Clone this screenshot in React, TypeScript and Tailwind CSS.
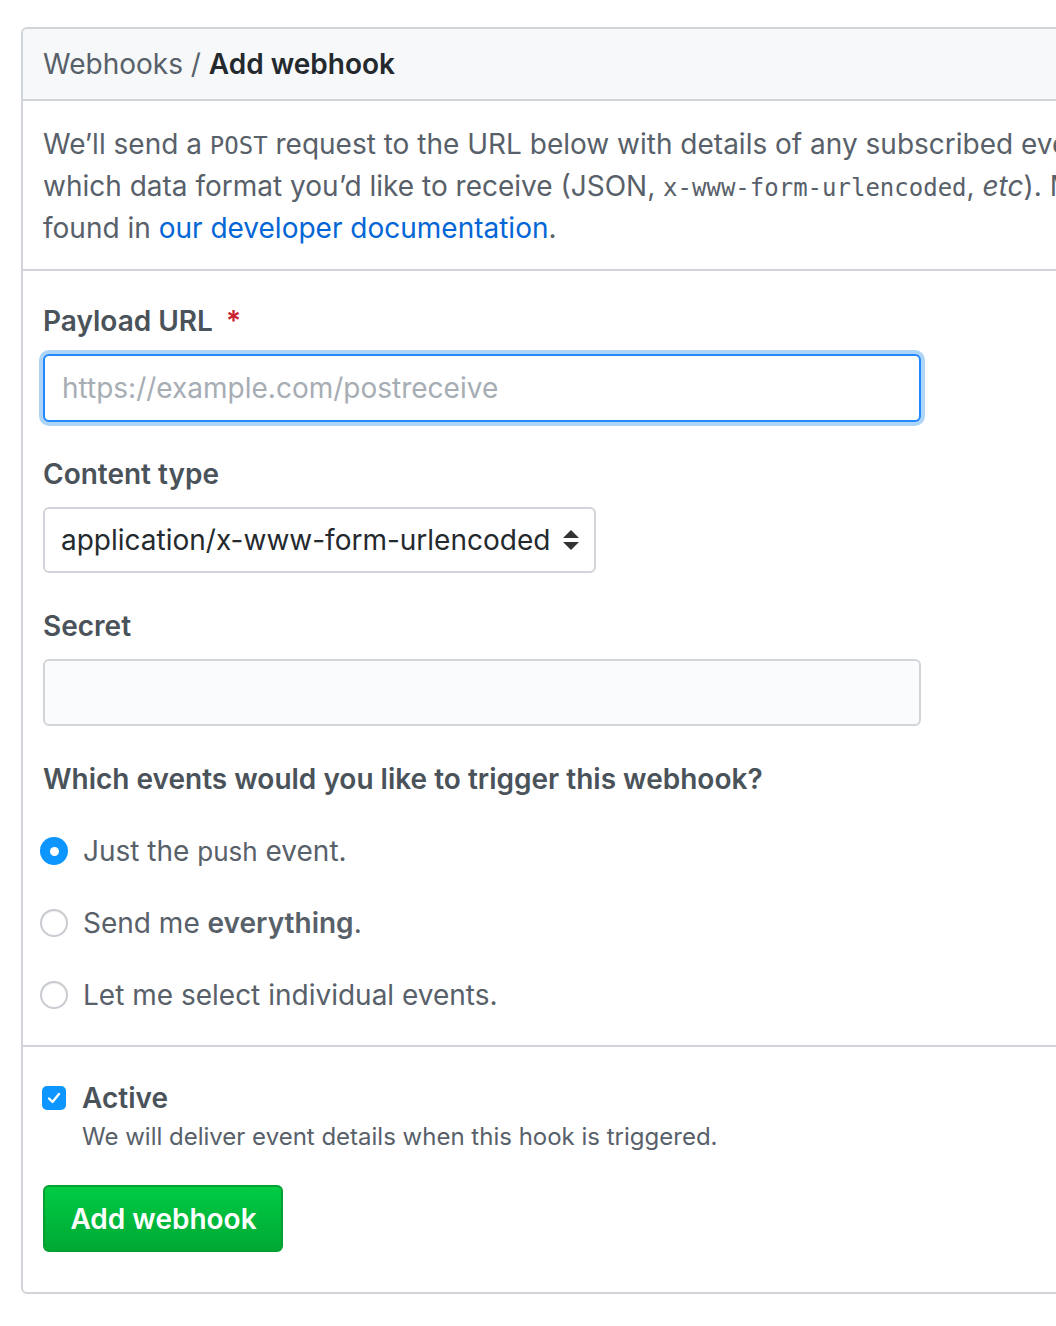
import React from 'react';

function Radio({ checked }: { checked?: boolean }) {
  if (checked) {
    return (
      <span className="-ml-[3px] flex h-[28px] w-[28px] shrink-0 items-center justify-center rounded-full bg-[#0d96ff]">
        <span className="h-[9px] w-[9px] rounded-full bg-white" />
      </span>
    );
  }
  return (
    <span className="-ml-[3px] h-[28px] w-[28px] shrink-0 rounded-full border-2 border-[#c9ccd0] bg-white shadow-[inset_0_1px_1px_rgba(0,0,0,0.06)]" />
  );
}

export default function App() {
  return (
    <div
      className="h-[1326px] w-[1056px] overflow-hidden bg-white pl-[21px] pt-[27px]"
      style={{ fontFamily: 'Inter, "Noto Sans", sans-serif' }}
    >
      <div className="w-[1200px] rounded-[6px] border-2 border-[#d1d5da] bg-white">
        {/* Header */}
        <div className="rounded-t-[5px] border-b-2 border-[#d1d5da] bg-[#f6f8fa] px-[20px] py-[14px] text-[28px] leading-[42px] text-[#586069]">
          Webhooks / <span className="font-semibold text-[#24292e]">Add webhook</span>
        </div>

        {/* Intro */}
        <div className="whitespace-nowrap border-b-2 border-[#d1d5da] px-[20px] pb-[20px] pt-[22px] text-[28px] leading-[42px] text-[#586069]">
          <p className="h-[42px]">
            We’ll send a <code className="font-['DejaVu_Sans_Mono',monospace] text-[24px] leading-none">POST</code> request to the URL below with details of any subscribed events. You can also specify
          </p>
          <p className="h-[42px]">
            which data format you’d like to receive (JSON,{' '}
            <code className="font-['DejaVu_Sans_Mono',monospace] text-[24px] leading-none">x-www-form-urlencoded</code>,{' '}
            <em>etc</em>). More information can be
          </p>
          <p className="h-[42px]">
            found in <a className="text-[#0366d6]">our developer documentation</a>.
          </p>
        </div>

        {/* Form */}
        <div className="border-b-2 border-[#d1d5da] px-[20px] pb-[29px] pt-[29px]">
          <label className="mb-[12px] block text-[28px] font-semibold leading-[42px] text-[#4a525a]">
            Payload URL <span className="ml-[6px] text-[#cb2431]">*</span>
          </label>
          <div className="flex h-[68px] w-[878px] items-center rounded-[6px] border-2 border-[#2188ff] bg-white pl-[17px] text-[28px] text-[#a6adb4] shadow-[0_0_0_4px_#aed4f8]">
            https://example.com/postreceive
          </div>

          <label className="mb-[12px] mt-[31px] block text-[28px] font-semibold leading-[42px] text-[#4a525a]">
            Content type
          </label>
          <div className="flex h-[66px] w-[553px] items-center justify-between whitespace-nowrap rounded-[6px] border-2 border-[#d1d5da] bg-white pl-[16px] pr-[14px] text-[28px] text-[#24292e]">
            <span>application/x-www-form-urlencoded</span>
            <svg width="18" height="22" viewBox="0 0 18 22" className="text-[#333]">
              <path d="M9 1 L17 9 L1 9 Z" fill="currentColor" />
              <path d="M1 13 L17 13 L9 21 Z" fill="currentColor" />
            </svg>
          </div>

          <label className="mb-[12px] mt-[32px] block text-[28px] font-semibold leading-[42px] text-[#4a525a]">
            Secret
          </label>
          <div className="h-[67px] w-[878px] rounded-[6px] border-2 border-[#d1d5da] bg-[#fafbfc]" />

          <div className="mt-[32px] text-[28px] font-semibold leading-[42px] text-[#4a525a]">
            Which events would you like to trigger this webhook?
          </div>

          <div className="mt-[30px] flex flex-col gap-[30px] text-[28px] leading-[42px] text-[#586069]">
            <div className="flex h-[42px] items-center gap-[15px]">
              <Radio checked />
              <span>
                Just the <span className="text-[26px]">push</span> event.
              </span>
            </div>
            <div className="flex h-[42px] items-center gap-[15px]">
              <Radio />
              <span>
                Send me <span className="font-semibold">everything</span>.
              </span>
            </div>
            <div className="flex h-[42px] items-center gap-[15px]">
              <Radio />
              <span>Let me select individual events.</span>
            </div>
          </div>
        </div>

        {/* Active + submit */}
        <div className="px-[20px] pb-[40px] pt-[30px]">
          <div className="flex items-start gap-[16px]">
            <span className="-ml-[1px] mt-[9px] flex h-[24px] w-[24px] shrink-0 items-center justify-center rounded-[5px] bg-[#0d96ff]">
              <svg width="16" height="16" viewBox="0 0 16 16">
                <path d="M3 8.5 L6.5 12 L13 4" fill="none" stroke="white" strokeWidth="2.4" strokeLinecap="round" strokeLinejoin="round" />
              </svg>
            </span>
            <div>
              <div className="text-[28px] font-semibold leading-[42px] text-[#4a525a]">Active</div>
              <div className="text-[24px] leading-[36px] text-[#586069]">
                We will deliver event details when this hook is triggered.
              </div>
            </div>
          </div>

          <button className="mt-[30px] h-[67px] w-[240px] rounded-[6px] border-2 border-[#05a032] bg-gradient-to-b from-[#00cc44] to-[#00a834] pl-[1px] text-[28px] font-semibold text-white">
            Add webhook
          </button>
        </div>
      </div>
    </div>
  );
}
